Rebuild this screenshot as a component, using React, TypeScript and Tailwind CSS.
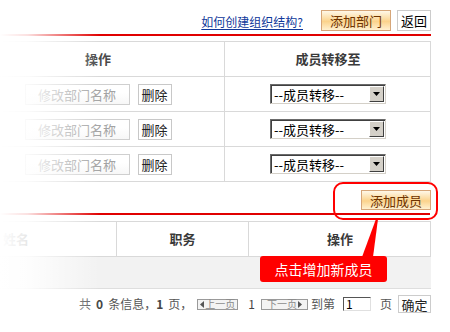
export default function App() {
  const rows = [0, 1, 2];
  return (
    <div className="relative w-[450px] h-[332px] overflow-hidden bg-white font-['Noto_Sans_CJK_SC',sans-serif] text-[12px] text-[#333]">
      {/* top bar */}
      <div className="flex h-[31px] items-end justify-end pr-[19px]">
        <a className="mb-[2px] mr-[18px] text-[12px] leading-[14px] text-[#10389a] underline underline-offset-2">
          如何创建组织结构?
        </a>
        <button className="flex h-[21px] w-[70px] items-center justify-center border border-[#d6a679] bg-[linear-gradient(to_bottom,#fff8e8,#fbd38c_55%,#fff1d0)] text-[13px] leading-none text-[#6e3300]">
          添加部门
        </button>
        <button className="ml-[6px] flex h-[21px] w-[34px] items-center justify-center border border-[#cccccc] bg-white text-[13px] leading-none text-black">
          返回
        </button>
      </div>
      <div className="mr-[19px] mt-[3px] h-[2px] bg-[#e00000]" />

      {/* table 1 */}
      <div className="ml-[-28px] mt-[5px] grid w-[459px] grid-cols-[253px_206px] border-r border-t border-[#d9d9d9]">
        <div className="flex h-[35px] items-center justify-center border-b border-r border-[#d9d9d9] text-[13px] font-bold text-[#4a4a4a]">
          操作
        </div>
        <div className="flex h-[35px] items-center justify-center border-b border-[#d9d9d9] text-[13px] font-bold text-[#3a3a3a]">
          成员转移至
        </div>
        {rows.map((i) => (
          <div key={i} className="contents">
            <div className="flex h-[35px] items-center justify-center gap-[8px] border-b border-r border-[#d9d9d9]">
              <div className="flex h-[21px] w-[105px] items-center justify-center border border-[#cfcfcf] bg-[linear-gradient(to_bottom,#ffffff,#ffffff_40%,#f7f7f7)] text-[13px] leading-none text-[#a3a3a3]">
                修改部门名称
              </div>
              <button className="flex h-[21px] w-[34px] items-center justify-center border border-[#c8c8c8] bg-white text-[13px] leading-none text-[#222]">
                删除
              </button>
            </div>
            <div className="flex h-[35px] items-center justify-center border-b border-[#d9d9d9]">
              <div className="flex h-[20px] w-[116px] items-center border border-b-[#d4d0c8] border-l-[#6b6b6b] border-r-[#d4d0c8] border-t-[#6b6b6b] bg-white shadow-[inset_1px_1px_0_#404040]">
                <span className="ml-[3px] flex-1 text-[13px] leading-none text-black">--成员转移--</span>
                <span className="mr-[1px] flex h-[16px] w-[15px] items-center justify-center border border-b-[#404040] border-l-white border-r-[#404040] border-t-white bg-[#d4d0c8]">
                  <svg width="7" height="4" viewBox="0 0 7 4">
                    <polygon points="0,0 7,0 3.5,4" fill="#000" />
                  </svg>
                </span>
              </div>
            </div>
          </div>
        ))}
      </div>

      {/* add member */}
      <div className="mt-[8px] flex justify-end pr-[19px]">
        <button className="flex h-[20px] w-[70px] items-center justify-center border border-[#d6a679] bg-[linear-gradient(to_bottom,#fff8e8,#fbd38c_55%,#fff1d0)] text-[13px] leading-none text-[#6e3300]">
          添加成员
        </button>
      </div>
      <div className="mr-[20px] mt-[3px] h-[2px] bg-[#e00000]" />

      {/* table 2 */}
      <div className="ml-[-84px] mt-[6px] grid w-[515px] grid-cols-[201px_132px_182px] border-r border-t border-[#d9d9d9]">
        <div className="flex h-[35px] items-center justify-center border-b border-r border-[#d9d9d9] text-[13px] font-bold text-[#3a3a3a]">
          姓名
        </div>
        <div className="flex h-[35px] items-center justify-center border-b border-r border-[#d9d9d9] text-[13px] font-bold text-[#3a3a3a]">
          职务
        </div>
        <div className="flex h-[35px] items-center justify-center border-b border-[#d9d9d9] text-[13px] font-bold text-[#3a3a3a]">
          操作
        </div>
      </div>
      <div className="h-[32px] w-[431px] border-b border-[#dedede] bg-[#f2f2f2]" />

      {/* pagination */}
      <div className="mt-[5px] flex h-[20px] items-center justify-end pr-[19px] text-[12px] leading-none text-[#555]">
        <span>共</span>
        <b className="mx-[5px] text-[#444]">0</b>
        <span>条信息，</span>
        <b className="mr-[5px] text-[#444]">1</b>
        <span>页，</span>
        <span className="ml-[5px] flex h-[11px] w-[41px] items-center justify-center gap-[1px] border border-[#9a9a9a] bg-[#f3f3f3] text-[10px] leading-none text-[#8a8a8a]">
          <svg width="4" height="7" viewBox="0 0 4 7">
            <polygon points="4,0 4,7 0,3.5" fill="#555" />
          </svg>
          上一页
        </span>
        <span className="ml-[10px] text-[#444]">1</span>
        <span className="ml-[6px] flex h-[11px] w-[47px] items-center justify-center gap-[1px] border border-[#9a9a9a] bg-[#f3f3f3] text-[10px] leading-none text-[#8a8a8a]">
          下一页
          <svg width="4" height="7" viewBox="0 0 4 7">
            <polygon points="0,0 0,7 4,3.5" fill="#555" />
          </svg>
        </span>
        <span className="ml-[3px]">到第</span>
        <span className="ml-[8px] flex h-[14px] w-[28px] items-center border border-b-[#e0e0e0] border-l-[#555] border-r-[#e0e0e0] border-t-[#555] bg-white pl-[2px] text-[12px] text-black">
          1
        </span>
        <span className="ml-[9px]">页</span>
        <button className="ml-[6px] flex h-[18px] w-[33px] items-center justify-center border border-[#cccccc] bg-white text-[13px] leading-none text-[#222]">
          确定
        </button>
      </div>

      {/* left fade */}
      <div className="pointer-events-none absolute left-0 top-0 h-full w-[100px] bg-[linear-gradient(to_right,#ffffff_0%,rgba(255,255,255,0.88)_28%,rgba(255,255,255,0)_100%)]" />

      {/* annotation */}
      <div className="pointer-events-none absolute left-[333px] top-[182px] h-[38px] w-[105px] rounded-[10px] border-2 border-[#ff0000]" />
      <svg className="pointer-events-none absolute left-[355px] top-[219px]" width="30" height="40" viewBox="0 0 30 40">
        <polygon points="7,38 18,38 23,0 21,0" fill="#ff0000" />
      </svg>
      <div className="absolute left-[260px] top-[256px] flex h-[26px] w-[127px] items-center justify-center rounded-[3px] bg-[#ff0000] text-[14px] leading-none text-white">
        点击增加新成员
      </div>
    </div>
  );
}
